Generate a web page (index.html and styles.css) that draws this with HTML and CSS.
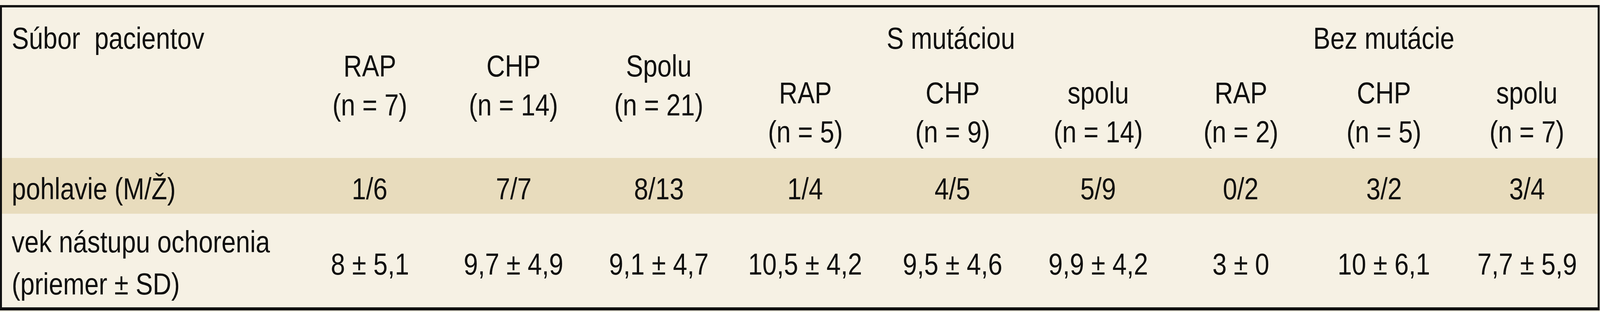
FILE: index.html
```html
<!DOCTYPE html>
<html lang="sk">
<head>
<meta charset="utf-8">
<title>Súbor pacientov</title>
<link rel="stylesheet" href="styles.css">
</head>
<body>
<table class="data">
  <colgroup>
    <col class="c-label">
    <col class="c1"><col class="c2"><col class="c3">
    <col class="c4"><col class="c5"><col class="c6">
    <col class="c7"><col class="c8"><col class="c9">
  </colgroup>
  <thead>
    <tr class="h1">
      <th class="label top" rowspan="2"><span class="t">Súbor&nbsp; pacientov</span></th>
      <th class="mid" rowspan="2"><span class="t">RAP<br>(n = 7)</span></th>
      <th class="mid" rowspan="2"><span class="t">CHP<br>(n = 14)</span></th>
      <th class="mid" rowspan="2"><span class="t">Spolu<br>(n = 21)</span></th>
      <th class="group" colspan="3"><span class="t">S mutáciou</span></th>
      <th class="group" colspan="3"><span class="t">Bez mutácie</span></th>
    </tr>
    <tr class="h2">
      <th class="sub"><span class="t">RAP<br>(n = 5)</span></th>
      <th class="sub"><span class="t">CHP<br>(n = 9)</span></th>
      <th class="sub"><span class="t">spolu<br>(n = 14)</span></th>
      <th class="sub"><span class="t">RAP<br>(n = 2)</span></th>
      <th class="sub"><span class="t">CHP<br>(n = 5)</span></th>
      <th class="sub"><span class="t">spolu<br>(n = 7)</span></th>
    </tr>
  </thead>
  <tbody>
    <tr class="shaded">
      <td class="label"><span class="t">pohlavie (M/Ž)</span></td>
      <td><span class="t">1/6</span></td><td><span class="t">7/7</span></td><td><span class="t">8/13</span></td>
      <td><span class="t">1/4</span></td><td><span class="t">4/5</span></td><td><span class="t">5/9</span></td>
      <td><span class="t">0/2</span></td><td><span class="t">3/2</span></td><td><span class="t">3/4</span></td>
    </tr>
    <tr class="plain">
      <td class="label"><span class="t">vek nástupu ochorenia<br>(priemer ± SD)</span></td>
      <td><span class="t">8 ± 5,1</span></td><td><span class="t">9,7 ± 4,9</span></td><td><span class="t">9,1 ± 4,7</span></td>
      <td><span class="t">10,5 ± 4,2</span></td><td><span class="t">9,5 ± 4,6</span></td><td><span class="t">9,9 ± 4,2</span></td>
      <td><span class="t">3 ± 0</span></td><td><span class="t">10 ± 6,1</span></td><td><span class="t">7,7 ± 5,9</span></td>
    </tr>
  </tbody>
</table>
</body>
</html>
```

FILE: styles.css
```css
/* Horizontal sizes in vw, vertical sizes in vh, so the table fills the
   frame the same way as the 4863 x 800 reference. The reference uses a
   condensed face, so glyphs are narrowed with scaleX. */

html, body {
  margin: 0;
  padding: 0;
  background: #f6f1e4;
  overflow: hidden;
}

body {
  height: 100vh;
  padding-top: 1.625vh;
  box-sizing: border-box;
  font-family: "Liberation Sans", Arial, sans-serif;
  color: #0e0e0e;
}

.data {
  table-layout: fixed;
  width: 99.98vw;
  border-collapse: separate;
  border-spacing: 0;
  border-top: 0.75vh solid #111;
  border-bottom: 1vh solid #111;
  border-left: 0.1234vw solid #111;
  border-right: 0.1234vw solid #111;
  background: #f6f1e4;
  font-size: 9.75vh;
  line-height: 12.5vh;
}

.c-label { width: 18.507vw; }
.c1 { width: 8.966vw; }
.c2 { width: 9.007vw; }
.c3 { width: 9.151vw; }
.c4 { width: 9.151vw; }
.c5 { width: 9.254vw; }
.c6 { width: 8.966vw; }
.c7 { width: 8.863vw; }
.c8 { width: 9.027vw; }
.c9 { width: 8.842vw; }

th, td {
  font-weight: normal;
  text-align: center;
  padding: 0;
  white-space: nowrap;
}

.t {
  display: inline-block;
  transform: scaleX(0.8423);
  transform-origin: center center;
}

.label {
  text-align: left;
  padding-left: 0.617vw;
}

.label .t {
  transform-origin: left center;
}

.h1 { height: 19.875vh; }
.h2 { height: 28.375vh; }

.top {
  vertical-align: top;
  padding-top: 3.625vh;
}

.mid {
  vertical-align: middle;
  padding-top: 1.75vh;
}

.group {
  vertical-align: top;
  padding-top: 3.625vh;
}

.sub {
  vertical-align: top;
  padding-top: 1.25vh;
}

.shaded td {
  background: #e8dcbd;
  height: 17.875vh;
  box-sizing: border-box;
  padding-top: 3.625vh;
  padding-bottom: 1.75vh;
  vertical-align: top;
}

.shaded td.label {
  padding-left: 0.617vw;
}

.plain td {
  height: 30vh;
  box-sizing: border-box;
  vertical-align: middle;
  padding-top: 2.25vh;
  line-height: 13vh;
}

.plain td.label {
  vertical-align: top;
  padding-top: 2.25vh;
  padding-left: 0.617vw;
  line-height: 13.5vh;
}
```
